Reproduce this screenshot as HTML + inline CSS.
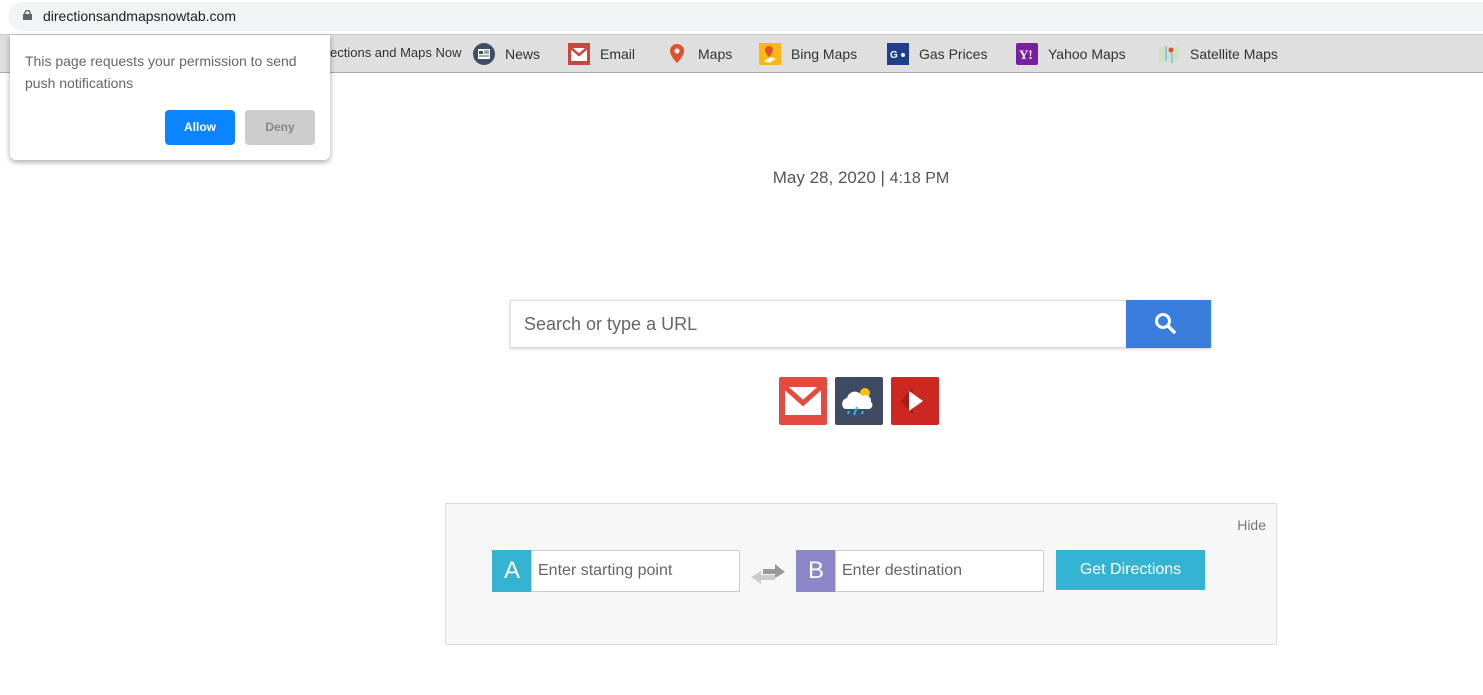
<!DOCTYPE html>
<html><head><style>
*{box-sizing:border-box;margin:0;padding:0}
body{width:1483px;height:695px;background:#fff;font-family:"Liberation Sans",Arial,sans-serif;position:relative;overflow:hidden}
.addr{position:absolute;left:8px;top:2px;width:1500px;height:29px;background:#f1f3f4;border-radius:15px}
.addr span{position:absolute;left:35px;top:6px;font-size:14px;color:#202124}
.lock{position:absolute;left:15px;top:8px;width:9px;height:10px}
.tb{position:absolute;left:0;top:34px;width:1483px;height:39px;background:#dfdfdf;border-bottom:1px solid #aaa;border-top:1px solid #ccc}
.it{position:absolute;top:8px;font-size:14px;color:#333;display:flex;align-items:center}
.ic{width:22px;height:22px;margin-right:10px;display:inline-block}
.pop{position:absolute;left:10px;top:35px;width:320px;height:125px;background:#fff;border-radius:0 0 6px 6px;box-shadow:0 2px 6px rgba(0,0,0,.35)}
.pop p{position:absolute;left:15px;top:15px;font-size:14px;line-height:22px;color:#666;width:290px}
.btn{position:absolute;top:75px;width:70px;height:35px;border-radius:4px;font-size:12px;font-weight:bold;text-align:center;line-height:35px}
.date{position:absolute;left:0;width:1722px;top:168px;text-align:center;font-size:17px;color:#555}
.sb{position:absolute;left:510px;top:300px;width:701px;height:48px;border:1px solid #ddd;box-shadow:0 1px 3px rgba(0,0,0,.2);background:#fff}
.sb span{position:absolute;left:13px;top:13px;font-size:18px;color:#666}
.sbtn{position:absolute;right:-1px;top:-1px;width:85px;height:48px;background:#3b7ddd}
.q{position:absolute;top:377px;width:48px;height:48px}
.dir{position:absolute;left:445px;top:503px;width:832px;height:142px;background:#f7f7f7;border:1px solid #ddd}
.lab{position:absolute;top:46px;width:40px;height:42px;color:#fff;font-size:24px;text-align:center;line-height:42px}
.inp{position:absolute;top:46px;width:209px;height:42px;background:#fff;border:1px solid #ccc;font-size:16px;color:#666;padding:11px 6px}
</style></head><body>
<div class="addr"><svg class="lock" viewBox="0 0 9 10"><rect x="0" y="4" width="9" height="6" fill="#5f6368"/><path d="M2 4V3a2.5 2.5 0 0 1 5 0v1" stroke="#5f6368" stroke-width="1.4" fill="none"/></svg><span>directionsandmapsnowtab.com</span></div>
<div class="tb">
<div class="it" style="left:330px;top:10px;font-size:13px">ections and Maps Now</div>
<div class="it" style="left:473px"><svg class="ic" viewBox="0 0 22 22"><circle cx="11" cy="11" r="11" fill="#3d4f66"/><rect x="5" y="6" width="12" height="10" fill="#fff"/><rect x="6" y="8" width="4" height="3" fill="#3d4f66"/><path d="M11 8h5M11 10h5M6 13h10" stroke="#3d4f66"/></svg>News</div>
<div class="it" style="left:568px"><svg class="ic" viewBox="0 0 22 22"><rect width="22" height="22" fill="#c9463d"/><rect x="3" y="5" width="16" height="13" fill="#fff"/><path d="M3 5l8 7 8-7" stroke="#c9463d" stroke-width="2.5" fill="none"/></svg>Email</div>
<div class="it" style="left:666px"><svg class="ic" viewBox="0 0 22 22"><path d="M11 1a7 7 0 0 0-7 7c0 5 7 12 7 12s7-7 7-12a7 7 0 0 0-7-7z" fill="#e0522b"/><circle cx="11" cy="8" r="2.5" fill="#fff"/></svg>Maps</div>
<div class="it" style="left:759px"><svg class="ic" viewBox="0 0 22 22"><rect width="22" height="22" fill="#fbb713"/><path d="M10 3a4 4 0 0 0-4 4c0 3 4 7 4 7s4-4 4-7a4 4 0 0 0-4-4z" fill="#e0522b"/><path d="M5 18l7-4 5 2-7 4z" fill="#fff"/></svg>Bing Maps</div>
<div class="it" style="left:887px"><svg class="ic" viewBox="0 0 22 22"><rect width="22" height="22" fill="#1f3f8a"/><text x="3" y="15" fill="#fff" font-size="10" font-weight="bold" font-family="Liberation Sans">G</text><circle cx="16" cy="12" r="2" fill="#fff"/></svg>Gas Prices</div>
<div class="it" style="left:1016px"><svg class="ic" viewBox="0 0 22 22"><rect width="22" height="22" rx="2" fill="#7b1fa2"/><text x="3" y="16" fill="#fff" font-size="13" font-weight="bold" font-family="Liberation Serif">Y!</text></svg>Yahoo Maps</div>
<div class="it" style="left:1158px"><svg class="ic" viewBox="0 0 22 22"><path d="M1 5l7-2 6 2 7-2v15l-7 2-6-2-7 2z" fill="#cfe3c4"/><path d="M8 3v15M14 5v15" stroke="#9cc2e6" stroke-width="2"/><circle cx="13" cy="7" r="2.5" fill="#e0522b"/></svg>Satellite Maps</div>
</div>
<div class="pop"><p>This page requests your permission to send push notifications</p>
<div class="btn" style="left:155px;background:#0a84ff;color:#fff">Allow</div>
<div class="btn" style="left:235px;background:#ccc;color:#888">Deny</div></div>
<div class="date">May 28, 2020 | <span style="font-size:16px">4:18 PM</span></div>
<div class="sb"><span>Search or type a URL</span><div class="sbtn"><svg width="85" height="48" viewBox="0 0 85 48"><circle cx="37" cy="21" r="6.5" stroke="#fff" stroke-width="3" fill="none"/><path d="M42 26l6 6" stroke="#fff" stroke-width="3.5" stroke-linecap="round"/></svg></div></div>
<svg class="q" style="left:779px" viewBox="0 0 48 48"><rect width="48" height="48" rx="2" fill="#e44b40"/><rect x="6" y="10" width="30" height="28" fill="#fff"/><rect x="36" y="10" width="6" height="28" fill="#fff"/><path d="M6 10l18 16 18-16" stroke="#e44b40" stroke-width="5" fill="none"/></svg>
<svg class="q" style="left:835px" viewBox="0 0 48 48"><rect width="48" height="48" rx="2" fill="#3f4b63"/><circle cx="30" cy="16" r="5" fill="#f4c20d"/><path d="M10 32a6 6 0 0 1 2-11 8 8 0 0 1 15-2 6 6 0 0 1 9 6 4 4 0 0 1-2 7z" fill="#fff"/><path d="M22 30l-3 8M14 34l-1 3M28 34l-1 3" stroke="#29b6f6" stroke-width="2"/></svg>
<svg class="q" style="left:891px" viewBox="0 0 48 48"><rect width="48" height="48" rx="2" fill="#cc2720"/><path d="M10 24l12-14v28z" fill="#a91d18"/><path d="M18 14l14 10-14 10z" fill="#fff"/></svg>
<div class="dir">
<div style="position:absolute;right:10px;top:13px;font-size:14px;color:#777">Hide</div>
<div class="lab" style="left:46px;background:#35b3d3">A</div>
<div class="inp" style="left:85px">Enter starting point</div>
<svg style="position:absolute;left:303px;top:55px" width="40" height="26" viewBox="0 0 40 26"><path d="M14 10h12V5l10 8-10 6v-4H14z" fill="#999"/><path d="M26 16H12v-4L2 18l10 7v-4h14z" fill="#ccc"/></svg>
<div class="lab" style="left:350px;background:#8b87c9">B</div>
<div class="inp" style="left:389px;width:209px">Enter destination</div>
<div style="position:absolute;left:610px;top:46px;width:149px;height:40px;background:#35b3d3;color:#fff;font-size:16px;text-align:center;line-height:40px">Get Directions</div>
</div>
</body></html>
